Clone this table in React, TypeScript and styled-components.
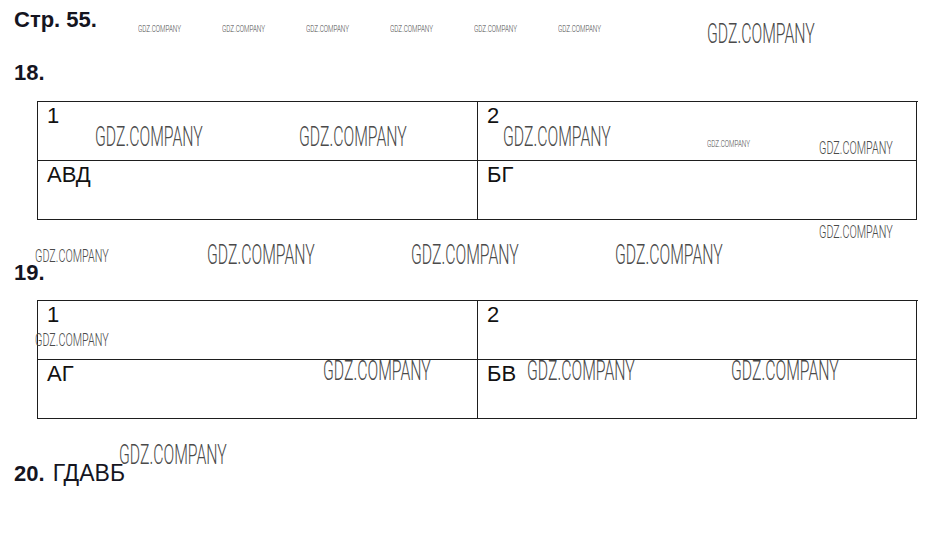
import React from "react";
import styled, { createGlobalStyle } from "styled-components";

const GlobalStyle = createGlobalStyle`
  html, body {
    margin: 0;
    padding: 0;
    background: #ffffff;
  }
  body {
    font-family: "Liberation Sans", Arial, sans-serif;
    color: #121212;
  }
`;

type MarkSize = "sm" | "md" | "lg";

const markSizes: { [key in MarkSize]: { font: number; scale: number } } = {
  sm: { font: 9, scale: 0.7 },
  md: { font: 18, scale: 0.6 },
  lg: { font: 27, scale: 0.585 },
};

// [left, capTop, size]
const marks: [number, number, MarkSize][] = [
  [138, 26, "sm"],
  [222, 26, "sm"],
  [306, 26, "sm"],
  [390, 26, "sm"],
  [474, 26, "sm"],
  [558, 26, "sm"],
  [707, 25, "lg"],
  [95, 128, "lg"],
  [299, 128, "lg"],
  [503, 128, "lg"],
  [707, 141, "sm"],
  [819, 141, "md"],
  [819, 225, "md"],
  [35, 249, "md"],
  [207, 246, "lg"],
  [411, 246, "lg"],
  [615, 246, "lg"],
  [35, 333, "md"],
  [323, 362, "lg"],
  [527, 362, "lg"],
  [731, 362, "lg"],
  [119, 446, "lg"],
];

const tasks = [
  { num: "18.", top: 29, gap: 16, cells: ["1", "2", "АВД", "БГ"] },
  { num: "19.", top: 41, gap: 15, cells: ["1", "2", "АГ", "БВ"] },
];

function App() {
  return (
    <Page>
      <GlobalStyle />
      <PageTitle>Стр. 55.</PageTitle>

      {tasks.map((task) => (
        <React.Fragment key={task.num}>
          <TaskHeading $top={task.top}>{task.num}</TaskHeading>
          <AnswerTable $top={task.gap}>
            {task.cells.map((c, i) => (
              <Cell key={i}>{c}</Cell>
            ))}
          </AnswerTable>
        </React.Fragment>
      ))}

      <TaskHeading $top={42}>
        20. <Answer>ГДАВБ</Answer>
      </TaskHeading>

      <MarkLayer>
        {marks.map(([left, top, size], i) => (
          <Mark
            key={i}
            $size={size}
            style={{ left, top: top - markSizes[size].font * 0.131 }}
          >
            GDZ.COMPANY
          </Mark>
        ))}
      </MarkLayer>
    </Page>
  );
}

const Page = styled.div`
  position: relative;
  box-sizing: border-box;
  width: 929px;
  height: 548px;
  padding: 8px 0 0 14px;
  overflow: hidden;
`;

const PageTitle = styled.div`
  font: 700 22px/24px "Liberation Sans", Arial, sans-serif;
  color: #15151f;
`;

const TaskHeading = styled.div<{ $top: number }>`
  margin-top: ${(p) => p.$top}px;
  font: 700 22px/24px "Liberation Sans", Arial, sans-serif;
  color: #15151f;
`;

const Answer = styled.span`
  font-weight: 400;
  font-size: 23px;
  margin-left: 2px;
`;

const AnswerTable = styled.div<{ $top: number }>`
  display: grid;
  grid-template-columns: 440px 439px;
  grid-auto-rows: 59px;
  width: 880px;
  margin: ${(p) => p.$top}px 0 0 23px;
  border-top: 1px solid #1e1e1e;
  border-left: 1px solid #1e1e1e;
`;

const Cell = styled.div`
  box-sizing: border-box;
  padding: 2px 10px 0 9px;
  border-right: 1px solid #1e1e1e;
  border-bottom: 1px solid #1e1e1e;
  font: 400 22px/23px "Liberation Sans", Arial, sans-serif;
  color: #121212;
`;

const MarkLayer = styled.div`
  position: absolute;
  inset: 0;
  pointer-events: none;
`;

const Mark = styled.span<{ $size: MarkSize }>`
  position: absolute;
  display: inline-block;
  white-space: nowrap;
  font-family: Roboto, "DejaVu Sans", sans-serif;
  font-weight: 300;
  font-size: ${(p) => markSizes[p.$size].font}px;
  line-height: 1;
  color: #4a4a4a;
  transform: scaleX(${(p) => markSizes[p.$size].scale});
  transform-origin: left top;
`;

export default App;
